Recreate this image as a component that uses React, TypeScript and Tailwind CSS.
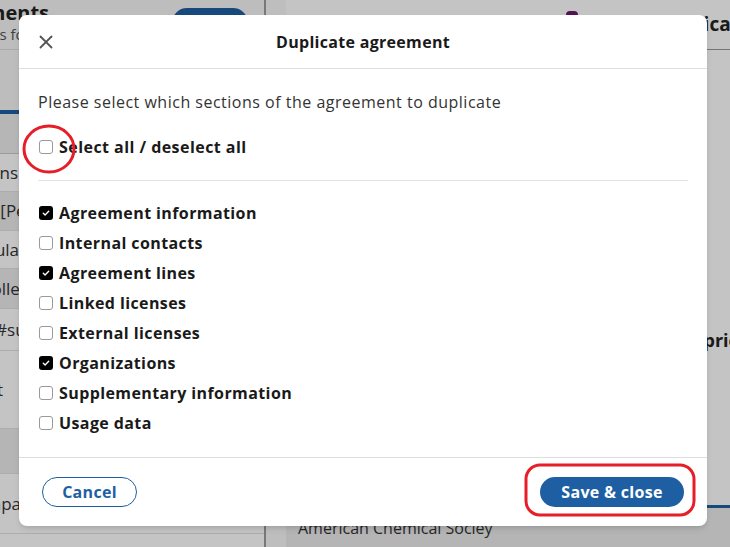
import { X } from "lucide-react";

const sections = [
  { id: "info", label: "Agreement information", checked: true },
  { id: "contacts", label: "Internal contacts", checked: false },
  { id: "lines", label: "Agreement lines", checked: true },
  { id: "linked", label: "Linked licenses", checked: false },
  { id: "external", label: "External licenses", checked: false },
  { id: "orgs", label: "Organizations", checked: true },
  { id: "supp", label: "Supplementary information", checked: false },
  { id: "usage", label: "Usage data", checked: false },
];

// list rows of the agreements pane; text is right-aligned in a box that ends at `end`
const leftRows = [
  { text: "Subscriptions", bg: "bg-white", h: "h-[38px]", end: "w-[118px]" },
  { text: "[Pending]", bg: "bg-[#ececec]", h: "h-[39px]", end: "w-[176px]" },
  { text: "Regular", bg: "bg-white", h: "h-[38px]", end: "w-[126px]" },
  { text: "Collection", bg: "bg-[#ececec]", h: "h-[40px]", end: "w-[159px]" },
  { text: "#subject", bg: "bg-white", h: "h-[42px]", end: "w-[164px]" },
  { text: "Print", bg: "bg-white", h: "h-[78px]", end: "w-[103px]" },
  { text: "", bg: "bg-[#ececec]", h: "h-[45px]", end: "w-[100px]" },
  { text: "Company", bg: "bg-white", h: "h-[60px]", end: "w-[140px]" },
];

function Checkbox({ checked }: { checked: boolean }) {
  if (checked) {
    return (
      <span className="ml-px flex h-[14px] w-[14px] shrink-0 items-center justify-center rounded-[3px] bg-black">
        <svg width="8" height="8" viewBox="0 0 8 8" fill="none">
          <path d="M1.3 4.2 3.1 5.9 6.7 2.2" stroke="white" strokeWidth="1.4" strokeLinecap="round" strokeLinejoin="round" />
        </svg>
      </span>
    );
  }
  return <span className="ml-px h-[14px] w-[14px] shrink-0 rounded-[3px] border border-[#9a9a9a] bg-white" />;
}

function BackgroundPage() {
  return (
    <div className="flex h-full w-full bg-white text-[#222]">
      <aside className="flex w-[266px] shrink-0 flex-col border-r-2 border-[#9c9c9c]">
        <div className="relative h-[50px] border-b border-[#ddd] bg-[#f6f6f6]">
          <div className="-ml-[72px] pt-[1px] text-[20px] leading-[24px] font-bold whitespace-nowrap">Agreements</div>
          <div className="-ml-[78px] text-[15px] leading-[18px] whitespace-nowrap text-[#555]">Agreements found</div>
          <div className="absolute top-[8px] left-[172px] h-[30px] w-[76px] rounded-full bg-[#1e5fa3]" />
        </div>
        <div className="h-[60px] bg-[#f6f6f6]" />
        <div className="h-[4px] bg-[#1e5fa3]" />
        <div className="h-[40px] border-b border-[#ccc] bg-[#ededed]" />
        {leftRows.map((row, i) => (
          <div key={i} className={`flex items-center ${row.bg} ${row.h} border-b border-[#e2e2e2]`}>
            <div className="w-[20px] overflow-hidden">
              <div className={`-ml-[100px] ${row.end} text-right text-[17px] whitespace-nowrap text-[#333]`}>{row.text}</div>
            </div>
          </div>
        ))}
      </aside>
      <div className="flex w-[20px] shrink-0 flex-col bg-[#f8f8f8]" />
      <main className="flex flex-1 flex-col">
        <div className="flex h-[50px] items-start border-b border-[#999] bg-white pt-[11px] pl-[280px]">
          <span className="h-[12px] w-[12px] rounded-sm bg-[#6a1a6a]" />
          <span className="mt-[1px] ml-[74px] text-[19px] leading-[24px] font-bold whitespace-nowrap">American Chemical Society</span>
        </div>
        <div className="flex h-[302px] items-end pl-[330px]">
          <span className="text-[18px] leading-[24px] font-bold whitespace-nowrap">Purchase price</span>
        </div>
        <div className="h-[153px]" />
        <div className="h-[3px] bg-[#1e5fa3]" />
        <div className="flex flex-1 items-center bg-[#ececec] pl-[12px]">
          <span className="text-[16px] whitespace-nowrap text-[#333]">American Chemical Socley</span>
        </div>
      </main>
    </div>
  );
}

export default function App() {
  return (
    <div className="relative h-[547px] w-[730px] overflow-hidden font-['Open_Sans',sans-serif]">
      <BackgroundPage />

      <div className="absolute inset-0 bg-black/[0.23] pt-[15px] pl-[19px]">
        <div className="flex h-[511px] w-[688px] flex-col rounded-lg bg-white shadow-md">
          <div className="relative flex h-[54px] shrink-0 items-center justify-center border-b border-[#dedede]">
            <button className="absolute top-[16px] left-[16px] text-[#555]">
              <X size={22} strokeWidth={2} />
            </button>
            <h2 className="text-[16px] font-bold tracking-[0.3px] text-[#1a1a1a]">Duplicate agreement</h2>
          </div>

          <div className="flex flex-1 flex-col px-[19px] pt-[21px]">
            <p className="text-[16px] leading-[24px] tracking-[0.5px] text-[#333]">
              Please select which sections of the agreement to duplicate
            </p>
            <label className="mt-[21px] flex h-[24px] items-center gap-[6px]">
              <Checkbox checked={false} />
              <span className="text-[16px] font-bold tracking-[0.45px] text-[#1a1a1a]">Select all / deselect all</span>
            </label>
            <div className="mt-[21px] mb-[17px] h-px bg-[#e2e2e2]" />
            <div className="flex flex-col">
              {sections.map((s) => (
                <label key={s.id} className="flex h-[30px] items-center gap-[6px]">
                  <Checkbox checked={s.checked} />
                  <span className="text-[16px] font-bold tracking-[0.4px] text-[#1a1a1a]">{s.label}</span>
                </label>
              ))}
            </div>
          </div>

          <div className="flex h-[69px] shrink-0 items-center justify-between border-t border-[#dedede] px-[23px]">
            <button className="h-[30px] w-[95px] rounded-full border border-[#1e5fa3] text-[16px] font-bold tracking-[0.3px] text-[#1e5fa3]">
              Cancel
            </button>
            <button className="h-[30px] w-[144px] rounded-full bg-[#1e5fa3] text-[16px] font-bold tracking-[0.3px] text-white">
              Save &amp; close
            </button>
          </div>
        </div>
      </div>

      {/* red markup drawn on top */}
      <svg className="pointer-events-none absolute inset-0" width="730" height="547" viewBox="0 0 730 547" fill="none">
        <ellipse cx="49" cy="149" rx="25" ry="23" stroke="#e61e28" strokeWidth="3" />
        <rect x="526" y="465" width="168" height="50" rx="14" stroke="#e61e28" strokeWidth="3" />
      </svg>
    </div>
  );
}
